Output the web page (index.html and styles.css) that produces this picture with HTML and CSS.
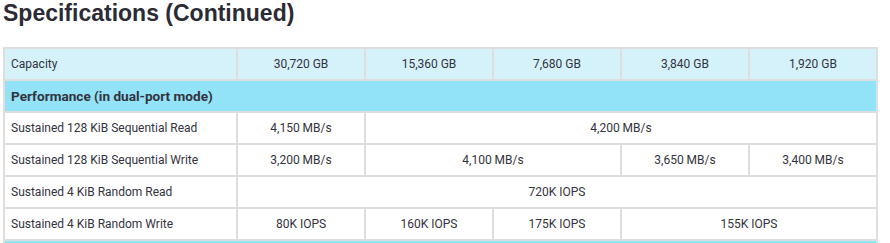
FILE: index.html
```html
<!DOCTYPE html>
<html>
<head>
<meta charset="utf-8">
<link rel="stylesheet" href="styles.css">
</head>
<body>
<div class="page">
  <h1 class="title">Specifications (Continued)</h1>
  <table class="specs">
    <colgroup>
      <col class="c-label">
      <col class="c-val"><col class="c-val"><col class="c-val"><col class="c-val"><col class="c-val">
    </colgroup>
    <tbody>
      <tr class="cap">
        <td class="label">Capacity</td>
        <td>30,720 GB</td><td>15,360 GB</td><td>7,680 GB</td><td>3,840 GB</td><td>1,920 GB</td>
      </tr>
      <tr class="section">
        <td colspan="6">Performance (in dual-port mode)</td>
      </tr>
      <tr>
        <td class="label">Sustained 128 KiB Sequential Read</td>
        <td>4,150 MB/s</td><td colspan="4">4,200 MB/s</td>
      </tr>
      <tr>
        <td class="label">Sustained 128 KiB Sequential Write</td>
        <td>3,200 MB/s</td><td colspan="2">4,100 MB/s</td><td>3,650 MB/s</td><td>3,400 MB/s</td>
      </tr>
      <tr>
        <td class="label">Sustained 4 KiB Random Read</td>
        <td colspan="5">720K IOPS</td>
      </tr>
      <tr>
        <td class="label">Sustained 4 KiB Random Write</td>
        <td>80K IOPS</td><td>160K IOPS</td><td>175K IOPS</td><td colspan="2">155K IOPS</td>
      </tr>
      <tr class="section">
        <td colspan="6"></td>
      </tr>
    </tbody>
  </table>
</div>
</body>
</html>
```
FILE: styles.css
```css
html, body {
  margin: 0;
  padding: 0;
  background: #ffffff;
}
.page {
  padding: 0 3px;
  font-family: Roboto, "Liberation Sans", sans-serif;
  color: #33333d;
}
.title {
  margin: 0;
  height: 47px;
  font-family: "Liberation Sans", Arial, sans-serif;
  font-weight: bold;
  font-size: 23px;
  line-height: 26px;
  color: #2b2b35;
}
.specs {
  border-collapse: collapse;
  table-layout: fixed;
  width: 873px;
  border: 2px solid #dedede;
}
.c-label { width: 233px; }
.c-val { width: 128px; }
.specs td {
  border: 2px solid #dedede;
  height: 32px;
  padding: 0 6px;
  box-sizing: border-box;
  font-size: 12px;
  text-align: center;
  vertical-align: middle;
}
.specs td.label {
  text-align: left;
}
.cap td {
  background: #d5f2fb;
}
.section td {
  background: #92e2f8;
  font-weight: bold;
  font-size: 13.6px;
  text-align: left;
}
```
